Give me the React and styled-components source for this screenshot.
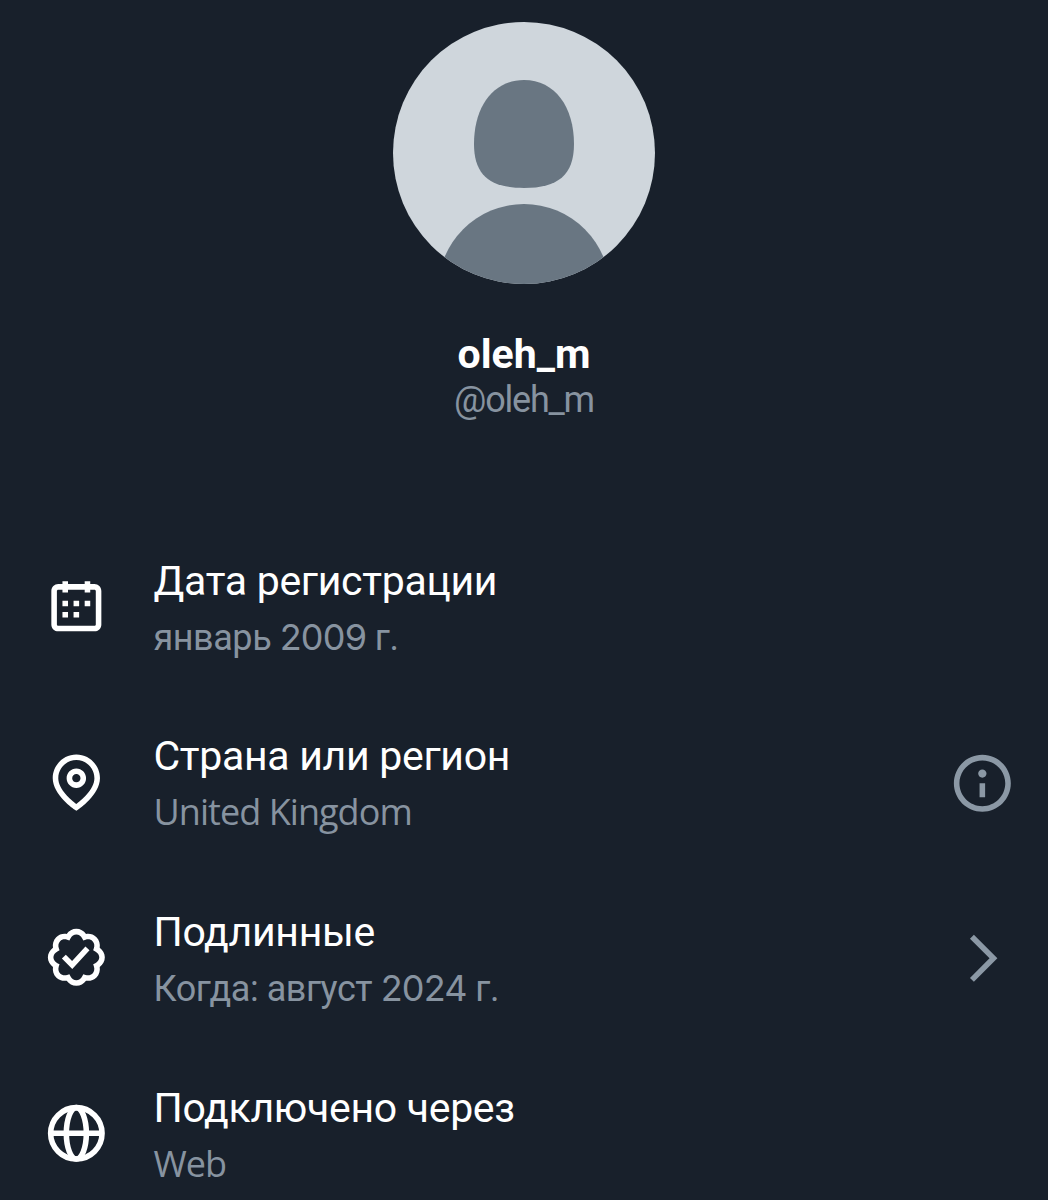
import React from 'react';
import styled, { createGlobalStyle } from 'styled-components';

const GlobalStyle = createGlobalStyle`
  body {
    margin: 0;
    background-color: #18202b;
  }
`;
const Page = styled.main`
  box-sizing: border-box;
  width: 1048px;
  height: 1200px;
  padding-top: 22px;
  overflow: hidden;
  background-color: #18202b;
  font-family: Roboto, sans-serif;
  color: #ffffff;
`;
const ProfileHeader = styled.header`
  display: flex;
  flex-direction: column;
  align-items: center;
  height: 496.4px;
`;
const Avatar = styled.svg`
  width: 262px;
  height: 262px;
  border-radius: 50%;
  background-color: #cfd6dc;
`;
const DisplayName = styled.h1`
  margin: 46px 0 0;
  font-size: 41px;
  font-weight: 700;
  line-height: 48px;
`;
const Handle = styled.div`
  font-size: 36px;
  line-height: 44px;
  letter-spacing: -1.2px;
  color: #8793a0;
`;
const InfoList = styled.ul`
  margin: 0;
  padding: 0;
  list-style: none;
`;
const InfoRow = styled.li`
  display: flex;
  align-items: center;
  height: 175.7px;
  padding: 0 32px 0 43.3px;
`;
const Icon = styled.svg`
  flex: none;
  width: 66.7px;
  height: 66.7px;
  margin-top: ${({ $muted }) => ($muted ? '2px' : '0')};
  fill: ${({ $muted }) => ($muted ? '#8b98a5' : '#ffffff')};
`;
const RowText = styled.div`
  flex: 1;
  padding-top: 6px;
  margin-left: 43.5px;
`;
const RowTitle = styled.div`
  font-size: 41px;
  line-height: 56px;
  letter-spacing: -0.3px;
`;
const RowValue = styled.div`
  font-size: 36px;
  line-height: 56px;
  letter-spacing: -0.45px;
  color: #8793a0;
`;
const Latin = styled.span`
  font-family: 'Open Sans', sans-serif;
  letter-spacing: -0.95px;
`;
const Year = styled.span`
  font-family: Inter, sans-serif;
  letter-spacing: -0.8px;
`;

const CalendarIcon = () => (
  <Icon viewBox="0 0 24 24">
    <path d="M7 4V3h2v1h6V3h2v1h1.5C19.89 4 21 5.12 21 6.5v12c0 1.38-1.11 2.5-2.5 2.5h-13C4.12 21 3 19.88 3 18.5v-12C3 5.12 4.12 4 5.5 4H7zm0 2H5.5c-.27 0-.5.22-.5.5v12c0 .28.23.5.5.5h13c.28 0 .5-.22.5-.5v-12c0-.28-.22-.5-.5-.5H17v1h-2V6H9v1H7V6zm0 6h2v-2H7v2zm0 4h2v-2H7v2zm4-4h2v-2h-2v2zm0 4h2v-2h-2v2zm4-4h2v-2h-2v2z" />
  </Icon>
);

const LocationIcon = () => (
  <Icon viewBox="0 0 24 24">
    <path d="M12 7c-1.93 0-3.5 1.57-3.5 3.5S10.07 14 12 14s3.5-1.57 3.5-3.5S13.93 7 12 7zm0 5c-.827 0-1.5-.673-1.5-1.5S11.173 9 12 9s1.5.673 1.5 1.5S12.827 12 12 12zm0-10c-4.687 0-8.5 3.813-8.5 8.5 0 5.967 7.621 11.116 7.945 11.332l.555.37.555-.37c.324-.216 7.945-5.365 7.945-11.332C20.5 5.813 16.687 2 12 2zm0 17.77c-1.665-1.241-6.5-5.196-6.5-9.27C5.5 6.916 8.416 4 12 4s6.5 2.916 6.5 6.5c0 4.073-4.835 8.028-6.5 9.27z" />
  </Icon>
);

const VerifiedIcon = () => (
  <Icon viewBox="0 0 24 24">
    <path d="M8.52 3.59c.8-1.1 2.04-1.84 3.48-1.84s2.68.74 3.49 1.84c1.34-.21 2.74.14 3.76 1.16s1.37 2.42 1.16 3.77c1.1.8 1.84 2.04 1.84 3.48s-.74 2.68-1.84 3.48c.21 1.34-.14 2.75-1.16 3.77s-2.42 1.37-3.76 1.16c-.8 1.1-2.05 1.84-3.49 1.84s-2.68-.74-3.48-1.84c-1.34.21-2.75-.14-3.77-1.16-1.01-1.02-1.37-2.42-1.16-3.77-1.09-.8-1.84-2.04-1.84-3.48s.75-2.68 1.84-3.48c-.21-1.35.14-2.75 1.16-3.77s2.43-1.37 3.77-1.16zm3.48.16c-.85 0-1.66.53-2.12 1.43l-.38.77-.82-.27c-.96-.32-1.91-.12-2.51.49-.6.6-.8 1.54-.49 2.51l.27.81-.77.39c-.9.46-1.43 1.27-1.43 2.12s.53 1.66 1.43 2.12l.77.39-.27.81c-.31.97-.11 1.91.49 2.51.6.61 1.55.81 2.51.49l.82-.27.38.77c.46.9 1.27 1.43 2.12 1.43s1.66-.53 2.12-1.43l.39-.77.82.27c.96.32 1.9.12 2.51-.49.6-.6.8-1.55.48-2.51l-.26-.81.76-.39c.91-.46 1.43-1.27 1.43-2.12s-.52-1.66-1.43-2.12l-.77-.39.27-.81c.32-.97.12-1.91-.48-2.51-.61-.61-1.55-.81-2.51-.49l-.82.27-.39-.77c-.46-.9-1.27-1.43-2.12-1.43zm4.74 5.68l-6.2 6.77-3.74-3.74 1.41-1.42 2.26 2.26 4.8-5.23 1.47 1.36z" />
  </Icon>
);

const GlobeIcon = () => (
  <Icon viewBox="0 0 24 24">
    <g fill="none" stroke="#ffffff" strokeWidth="2">
      <circle cx="12" cy="12" r="9.25" />
      <ellipse cx="12" cy="12" rx="3.6" ry="9.25" />
      <path d="M2.75 12h18.5" />
    </g>
  </Icon>
);

const DetailsIcon = () => (
  <Icon viewBox="0 0 24 24" $muted>
    <path d="M13.5 8.5c0 .83-.67 1.5-1.5 1.5s-1.5-.67-1.5-1.5S11.17 7 12 7s1.5.67 1.5 1.5zM13 17v-5h-2v5h2zm-1 5.25c5.66 0 10.25-4.59 10.25-10.25S17.66 1.75 12 1.75 1.75 6.34 1.75 12 6.34 22.25 12 22.25zM20.25 12c0 4.56-3.69 8.25-8.25 8.25S3.75 16.56 3.75 12 7.44 3.75 12 3.75s8.25 3.69 8.25 8.25z" />
  </Icon>
);

const ChevronIcon = () => (
  <Icon viewBox="0 0 24 24" $muted>
    <path d="M14.586 12L7.543 4.96l1.414-1.42L17.414 12l-8.457 8.46-1.414-1.42L14.586 12z" />
  </Icon>
);

const App = () => {
  return (
    <>
      <GlobalStyle />
      <Page>
        <ProfileHeader>
          <Avatar viewBox="0 0 262 262" fill="#697682">
            <path d="M131 58c31 0 50 27 50 64 0 31-16 44-50 44s-50-13-50-44c0-37 19-64 50-64z" />
            <circle cx="131" cy="268" r="86" />
          </Avatar>
          <DisplayName>oleh_m</DisplayName>
          <Handle>@oleh_m</Handle>
        </ProfileHeader>
        <InfoList>
          <InfoRow>
            <CalendarIcon />
            <RowText>
              <RowTitle>Дата регистрации</RowTitle>
              <RowValue>
                январь <Year>2009</Year> г.
              </RowValue>
            </RowText>
          </InfoRow>
          <InfoRow>
            <LocationIcon />
            <RowText>
              <RowTitle>Страна или регион</RowTitle>
              <RowValue>
                <Latin>United Kingdom</Latin>
              </RowValue>
            </RowText>
            <DetailsIcon />
          </InfoRow>
          <InfoRow>
            <VerifiedIcon />
            <RowText>
              <RowTitle>Подлинные</RowTitle>
              <RowValue>
                Когда: август <Year>2024</Year> г.
              </RowValue>
            </RowText>
            <ChevronIcon />
          </InfoRow>
          <InfoRow>
            <GlobeIcon />
            <RowText>
              <RowTitle>Подключено через</RowTitle>
              <RowValue>
                <Latin>Web</Latin>
              </RowValue>
            </RowText>
          </InfoRow>
        </InfoList>
      </Page>
    </>
  );
};

export default App;
